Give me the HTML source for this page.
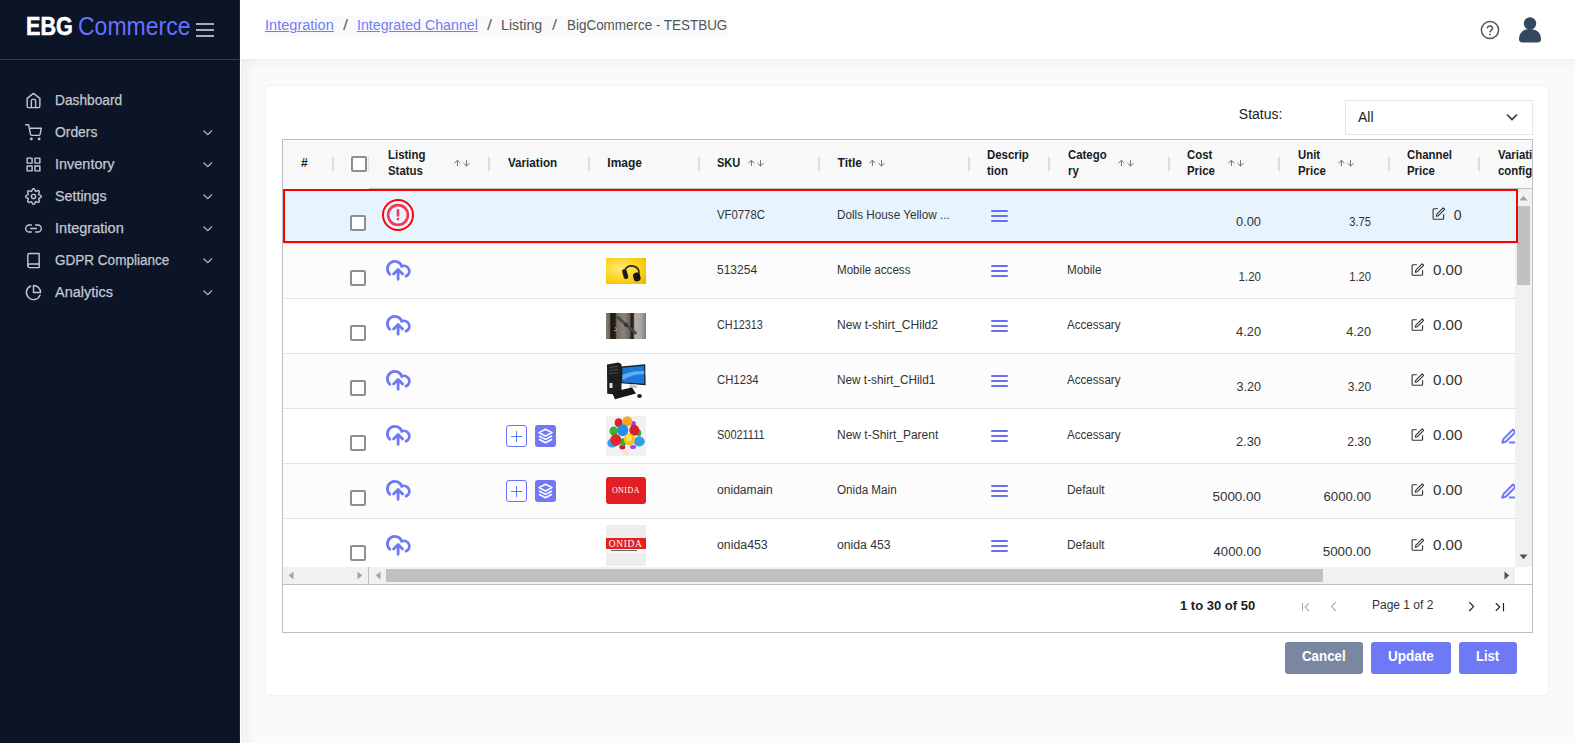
<!DOCTYPE html>
<html><head><meta charset="utf-8"><style>
html,body{margin:0;padding:0;}
body{width:1575px;height:743px;overflow:hidden;position:relative;font-family:"Liberation Sans", sans-serif;background:#f9fafb;}
.b{position:absolute;}
.t{position:absolute;line-height:1;white-space:nowrap;}
</style></head><body>
<div class="b" style="left:240.00px;top:0.00px;width:1335px;height:743px;background:#f9fafb;"></div>
<div class="b" style="left:240.00px;top:0.00px;width:1335px;height:59px;background:#fff;box-shadow:0 2px 8px 0 rgba(183,192,206,.22);"></div>
<div class="b" style="left:0.00px;top:0.00px;width:240px;height:743px;background:#0c1427;"></div>
<div class="b" style="left:239.00px;top:0.00px;width:1px;height:743px;background:#1a2335;"></div>
<div class="b" style="left:0.00px;top:59.00px;width:239px;height:1px;background:#2c3a50;"></div>
<div class="b" style="left:240.00px;top:0.00px;width:1px;height:743px;background:#fff;"></div>
<div class="b" style="left:241.00px;top:59.00px;width:14px;height:684px;background:linear-gradient(to right,rgba(183,192,206,.14),rgba(183,192,206,0));"></div>
<div class="t" style="top:12.90px;font-size:26px;color:#fff;font-weight:bold;left:26.00px;transform:scaleX(0.83);transform-origin:left center;-webkit-text-stroke:0.6px #fff;">EBG</div>
<div class="t" style="top:13.75px;font-size:25px;color:#6571ff;left:78.30px;transform:scaleX(0.92);transform-origin:left center;">Commerce</div>
<div class="b" style="left:196.00px;top:23.00px;width:18px;height:2px;background:#a9adb6;"></div>
<div class="b" style="left:196.00px;top:29.00px;width:18px;height:2px;background:#a9adb6;"></div>
<div class="b" style="left:196.00px;top:35.00px;width:18px;height:2px;background:#a9adb6;"></div>
<svg class="b" style="left:24.60px;top:92.00px;stroke:#c3c7cf;stroke-width:2;stroke-linecap:round;stroke-linejoin:round;" width="17" height="17" viewBox="0 0 24 24" fill="none"><path d="M3 9l9-7 9 7v11a2 2 0 0 1-2 2H5a2 2 0 0 1-2-2z"/><path d="M9 22V13a3 3 0 0 1 6 0v9"/></svg>
<div class="t" style="top:93.10px;font-size:14px;color:#c3c7cf;left:55.40px;transform:scaleX(0.981021897810219);transform-origin:left center;-webkit-text-stroke:0.25px #c3c7cf;">Dashboard</div>
<svg class="b" style="left:24.60px;top:124.00px;stroke:#c3c7cf;stroke-width:2;stroke-linecap:round;stroke-linejoin:round;" width="17" height="17" viewBox="0 0 24 24" fill="none"><circle cx="9" cy="21" r="1"/><circle cx="20" cy="21" r="1"/><path d="M1 1h4l2.68 13.39a2 2 0 0 0 2 1.61h9.72a2 2 0 0 0 2-1.61L23 6H6"/></svg>
<div class="t" style="top:125.10px;font-size:14px;color:#c3c7cf;left:55.40px;transform:scaleX(0.9906542056074766);transform-origin:left center;-webkit-text-stroke:0.25px #c3c7cf;">Orders</div>
<svg class="b" style="left:199.50px;top:125.20px;stroke:#c3c7cf;stroke-width:1.9;stroke-linecap:round;stroke-linejoin:round;" width="15.5" height="15.5" viewBox="0 0 24 24" fill="none"><polyline points="6 9 12 15 18 9"/></svg>
<svg class="b" style="left:24.60px;top:156.00px;stroke:#c3c7cf;stroke-width:2;stroke-linecap:round;stroke-linejoin:round;" width="17" height="17" viewBox="0 0 24 24" fill="none"><rect x="3" y="3" width="7" height="7"/><rect x="14" y="3" width="7" height="7"/><rect x="14" y="14" width="7" height="7"/><rect x="3" y="14" width="7" height="7"/></svg>
<div class="t" style="top:157.10px;font-size:14px;color:#c3c7cf;left:55.40px;transform:scaleX(1.0329861111111112);transform-origin:left center;-webkit-text-stroke:0.25px #c3c7cf;">Inventory</div>
<svg class="b" style="left:199.50px;top:157.20px;stroke:#c3c7cf;stroke-width:1.9;stroke-linecap:round;stroke-linejoin:round;" width="15.5" height="15.5" viewBox="0 0 24 24" fill="none"><polyline points="6 9 12 15 18 9"/></svg>
<svg class="b" style="left:24.60px;top:188.00px;stroke:#c3c7cf;stroke-width:2;stroke-linecap:round;stroke-linejoin:round;" width="17" height="17" viewBox="0 0 24 24" fill="none"><circle cx="12" cy="12" r="3"/><path d="M19.4 15a1.65 1.65 0 0 0 .33 1.82l.06.06a2 2 0 0 1 0 2.83 2 2 0 0 1-2.83 0l-.06-.06a1.65 1.65 0 0 0-1.82-.33 1.65 1.65 0 0 0-1 1.51V21a2 2 0 0 1-2 2 2 2 0 0 1-2-2v-.09A1.65 1.65 0 0 0 9 19.4a1.65 1.65 0 0 0-1.82.33l-.06.06a2 2 0 0 1-2.83 0 2 2 0 0 1 0-2.83l.06-.06a1.65 1.65 0 0 0 .33-1.82 1.65 1.65 0 0 0-1.51-1H3a2 2 0 0 1-2-2 2 2 0 0 1 2-2h.09A1.65 1.65 0 0 0 4.6 9a1.65 1.65 0 0 0-.33-1.82l-.06-.06a2 2 0 0 1 0-2.83 2 2 0 0 1 2.83 0l.06.06a1.65 1.65 0 0 0 1.82.33H9a1.65 1.65 0 0 0 1-1.51V3a2 2 0 0 1 2-2 2 2 0 0 1 2 2v.09a1.65 1.65 0 0 0 1 1.51 1.65 1.65 0 0 0 1.82-.33l.06-.06a2 2 0 0 1 2.83 0 2 2 0 0 1 0 2.83l-.06.06a1.65 1.65 0 0 0-.33 1.82V9a1.65 1.65 0 0 0 1.51 1H21a2 2 0 0 1 2 2 2 2 0 0 1-2 2h-.09a1.65 1.65 0 0 0-1.51 1z"/></svg>
<div class="t" style="top:189.10px;font-size:14px;color:#c3c7cf;left:55.40px;transform:scaleX(1.0217391304347827);transform-origin:left center;-webkit-text-stroke:0.25px #c3c7cf;">Settings</div>
<svg class="b" style="left:199.50px;top:189.20px;stroke:#c3c7cf;stroke-width:1.9;stroke-linecap:round;stroke-linejoin:round;" width="15.5" height="15.5" viewBox="0 0 24 24" fill="none"><polyline points="6 9 12 15 18 9"/></svg>
<svg class="b" style="left:24.60px;top:220.00px;stroke:#c3c7cf;stroke-width:2;stroke-linecap:round;stroke-linejoin:round;" width="17" height="17" viewBox="0 0 24 24" fill="none"><path d="M15 7h3a5 5 0 0 1 5 5 5 5 0 0 1-5 5h-3m-6 0H6a5 5 0 0 1-5-5 5 5 0 0 1 5-5h3"/><line x1="8" y1="12" x2="16" y2="12"/></svg>
<div class="t" style="top:221.10px;font-size:14px;color:#c3c7cf;left:55.40px;transform:scaleX(1.039274924471299);transform-origin:left center;-webkit-text-stroke:0.25px #c3c7cf;">Integration</div>
<svg class="b" style="left:199.50px;top:221.20px;stroke:#c3c7cf;stroke-width:1.9;stroke-linecap:round;stroke-linejoin:round;" width="15.5" height="15.5" viewBox="0 0 24 24" fill="none"><polyline points="6 9 12 15 18 9"/></svg>
<svg class="b" style="left:24.60px;top:252.00px;stroke:#c3c7cf;stroke-width:2;stroke-linecap:round;stroke-linejoin:round;" width="17" height="17" viewBox="0 0 24 24" fill="none"><path d="M4 19.5A2.5 2.5 0 0 1 6.5 17H20"/><path d="M6.5 2H20v20H6.5A2.5 2.5 0 0 1 4 19.5v-15A2.5 2.5 0 0 1 6.5 2z"/></svg>
<div class="t" style="top:253.10px;font-size:14px;color:#c3c7cf;left:55.40px;transform:scaleX(0.9661876584953508);transform-origin:left center;-webkit-text-stroke:0.25px #c3c7cf;">GDPR Compliance</div>
<svg class="b" style="left:199.50px;top:253.20px;stroke:#c3c7cf;stroke-width:1.9;stroke-linecap:round;stroke-linejoin:round;" width="15.5" height="15.5" viewBox="0 0 24 24" fill="none"><polyline points="6 9 12 15 18 9"/></svg>
<svg class="b" style="left:24.60px;top:284.00px;stroke:#c3c7cf;stroke-width:2;stroke-linecap:round;stroke-linejoin:round;" width="17" height="17" viewBox="0 0 24 24" fill="none"><path d="M21.21 15.89A10 10 0 1 1 8 2.83"/><path d="M22 12A10 10 0 0 0 12 2v10z"/></svg>
<div class="t" style="top:285.10px;font-size:14px;color:#c3c7cf;left:55.40px;transform:scaleX(1.0339285714285713);transform-origin:left center;-webkit-text-stroke:0.25px #c3c7cf;">Analytics</div>
<svg class="b" style="left:199.50px;top:285.20px;stroke:#c3c7cf;stroke-width:1.9;stroke-linecap:round;stroke-linejoin:round;" width="15.5" height="15.5" viewBox="0 0 24 24" fill="none"><polyline points="6 9 12 15 18 9"/></svg>
<div class="b" style="left:265.00px;top:16.00px;width:462px;height:21px;background:#f9fafb;"></div>
<div class="t" style="top:18.10px;font-size:14px;color:#727cf5;left:265.00px;transform:scaleX(1.04);transform-origin:left center;text-decoration:underline;">Integration</div>
<div class="t" style="top:18.10px;font-size:14px;color:#686868;left:343.00px;transform:scaleX(1.3);transform-origin:left center;">/</div>
<div class="t" style="top:18.10px;font-size:14px;color:#727cf5;left:357.00px;transform:scaleX(1.015);transform-origin:left center;text-decoration:underline;">Integrated Channel</div>
<div class="t" style="top:18.10px;font-size:14px;color:#686868;left:486.50px;transform:scaleX(1.3);transform-origin:left center;">/</div>
<div class="t" style="top:18.10px;font-size:14px;color:#555;left:501.00px;transform:scaleX(1.02);transform-origin:left center;">Listing</div>
<div class="t" style="top:18.10px;font-size:14px;color:#686868;left:552.00px;transform:scaleX(1.3);transform-origin:left center;">/</div>
<div class="t" style="top:18.10px;font-size:14px;color:#555;left:566.70px;transform:scaleX(0.96);transform-origin:left center;">BigCommerce - TESTBUG</div>
<svg class="b" style="left:1480.00px;top:20.00px;" width="20" height="20" viewBox="0 0 20 20" fill="none"><circle cx="10" cy="10" r="8.6" stroke="#555" stroke-width="1.5"/><path d="M7.4 7.9a2.6 2.6 0 0 1 5.1.6c0 1.6-2.4 2.1-2.4 3.3" stroke="#555" stroke-width="1.5" stroke-linecap="round"/><circle cx="10" cy="14.4" r="0.9" fill="#555"/></svg>
<svg class="b" style="left:1518.00px;top:17.00px;" width="24" height="26" viewBox="0 0 24 26" fill="none"><circle cx="12" cy="6.5" r="6.2" fill="#34495e"/><path d="M1 22.5C1 15.5 5.5 12 12 12s11 3.5 11 10.5c0 2-1.5 3-3.5 3h-15C2.5 25.5 1 24.5 1 22.5z" fill="#34495e"/></svg>
<div class="b" style="left:265.00px;top:85.00px;width:1284px;height:611px;background:#fff;border:1px solid #f0f1f6;border-radius:4px;box-sizing:border-box;"></div>
<div class="t" style="top:107.40px;font-size:14px;color:#222;left:1238.80px;">Status:</div>
<div class="b" style="left:1345.00px;top:100.00px;width:188px;height:35px;border:1px solid #e3e6ee;box-sizing:border-box;background:#fff;"></div>
<div class="t" style="top:109.50px;font-size:14px;color:#222;left:1358.00px;">All</div>
<svg class="b" style="left:1505.00px;top:112.00px;" width="14" height="10" viewBox="0 0 14 10" fill="none"><polyline points="2 2.5 7 7.5 12 2.5" stroke="#333" stroke-width="1.6" fill="none"/></svg>
<div class="b" style="left:282.00px;top:139.00px;width:1251px;height:494px;border:1px solid #babfc7;box-sizing:border-box;background:#fff;"></div>
<div class="b" style="left:283.00px;top:140.00px;width:1249px;height:48px;background:#f8f8f8;"></div>
<div class="b" style="left:369.00px;top:188.00px;width:1163px;height:1px;background:#babfc7;"></div>
<div class="b" style="left:368.00px;top:156.00px;width:1px;height:15px;background:#dde2eb;"></div>
<div class="b" style="left:332.00px;top:157.00px;width:2px;height:14px;background:rgba(186,191,199,.5);"></div>
<div class="b" style="left:488.00px;top:157.00px;width:2px;height:14px;background:rgba(186,191,199,.5);"></div>
<div class="b" style="left:588.00px;top:157.00px;width:2px;height:14px;background:rgba(186,191,199,.5);"></div>
<div class="b" style="left:698.00px;top:157.00px;width:2px;height:14px;background:rgba(186,191,199,.5);"></div>
<div class="b" style="left:818.00px;top:157.00px;width:2px;height:14px;background:rgba(186,191,199,.5);"></div>
<div class="b" style="left:968.00px;top:157.00px;width:2px;height:14px;background:rgba(186,191,199,.5);"></div>
<div class="b" style="left:1048.00px;top:157.00px;width:2px;height:14px;background:rgba(186,191,199,.5);"></div>
<div class="b" style="left:1168.00px;top:157.00px;width:2px;height:14px;background:rgba(186,191,199,.5);"></div>
<div class="b" style="left:1278.00px;top:157.00px;width:2px;height:14px;background:rgba(186,191,199,.5);"></div>
<div class="b" style="left:1388.00px;top:157.00px;width:2px;height:14px;background:rgba(186,191,199,.5);"></div>
<div class="b" style="left:1478.00px;top:157.00px;width:2px;height:14px;background:rgba(186,191,199,.5);"></div>
<div class="t" style="top:156.80px;font-size:12px;color:#181d1f;font-weight:bold;left:301.00px;">#</div>
<div class="b" style="left:351.00px;top:156.00px;width:16px;height:16px;border:2px solid #8e8e8e;border-radius:2px;box-sizing:border-box;background:#fff;"></div>
<div class="t" style="top:149.30px;font-size:12px;color:#181d1f;font-weight:bold;left:387.50px;transform:scaleX(0.95);transform-origin:left center;">Listing</div>
<div class="t" style="top:164.80px;font-size:12px;color:#181d1f;font-weight:bold;left:387.50px;transform:scaleX(0.95);transform-origin:left center;">Status</div>
<svg class="b" style="left:454.00px;top:159.00px;" width="17" height="9" viewBox="0 0 17 9" fill="none"><path d="M3.4 7V1.3M0.4 4.3L3.4 1.3l3 3M12.5 1.2V7M9.4 4l3.1 3.1 3.1-3.1" stroke="#5a5a5a" stroke-width="0.85" fill="none"/></svg>
<div class="t" style="top:157.00px;font-size:12px;color:#181d1f;font-weight:bold;left:507.50px;transform:scaleX(0.97);transform-origin:left center;">Variation</div>
<div class="t" style="top:157.00px;font-size:12px;color:#181d1f;font-weight:bold;left:607.30px;">Image</div>
<div class="t" style="top:157.00px;font-size:12px;color:#181d1f;font-weight:bold;left:717.40px;transform:scaleX(0.92);transform-origin:left center;">SKU</div>
<svg class="b" style="left:748.00px;top:159.00px;" width="17" height="9" viewBox="0 0 17 9" fill="none"><path d="M3.4 7V1.3M0.4 4.3L3.4 1.3l3 3M12.5 1.2V7M9.4 4l3.1 3.1 3.1-3.1" stroke="#5a5a5a" stroke-width="0.85" fill="none"/></svg>
<div class="t" style="top:157.00px;font-size:12px;color:#181d1f;font-weight:bold;left:837.60px;">Title</div>
<svg class="b" style="left:869.00px;top:159.00px;" width="17" height="9" viewBox="0 0 17 9" fill="none"><path d="M3.4 7V1.3M0.4 4.3L3.4 1.3l3 3M12.5 1.2V7M9.4 4l3.1 3.1 3.1-3.1" stroke="#5a5a5a" stroke-width="0.85" fill="none"/></svg>
<div class="t" style="top:149.30px;font-size:12px;color:#181d1f;font-weight:bold;left:987.40px;transform:scaleX(0.95);transform-origin:left center;">Descrip</div>
<div class="t" style="top:164.80px;font-size:12px;color:#181d1f;font-weight:bold;left:987.40px;transform:scaleX(0.95);transform-origin:left center;">tion</div>
<div class="t" style="top:149.30px;font-size:12px;color:#181d1f;font-weight:bold;left:1067.50px;transform:scaleX(0.95);transform-origin:left center;">Catego</div>
<div class="t" style="top:164.80px;font-size:12px;color:#181d1f;font-weight:bold;left:1067.50px;transform:scaleX(0.95);transform-origin:left center;">ry</div>
<svg class="b" style="left:1118.00px;top:159.00px;" width="17" height="9" viewBox="0 0 17 9" fill="none"><path d="M3.4 7V1.3M0.4 4.3L3.4 1.3l3 3M12.5 1.2V7M9.4 4l3.1 3.1 3.1-3.1" stroke="#5a5a5a" stroke-width="0.85" fill="none"/></svg>
<div class="t" style="top:149.30px;font-size:12px;color:#181d1f;font-weight:bold;left:1187.40px;transform:scaleX(0.95);transform-origin:left center;">Cost</div>
<div class="t" style="top:164.80px;font-size:12px;color:#181d1f;font-weight:bold;left:1187.40px;transform:scaleX(0.95);transform-origin:left center;">Price</div>
<svg class="b" style="left:1228.00px;top:159.00px;" width="17" height="9" viewBox="0 0 17 9" fill="none"><path d="M3.4 7V1.3M0.4 4.3L3.4 1.3l3 3M12.5 1.2V7M9.4 4l3.1 3.1 3.1-3.1" stroke="#5a5a5a" stroke-width="0.85" fill="none"/></svg>
<div class="t" style="top:149.30px;font-size:12px;color:#181d1f;font-weight:bold;left:1297.50px;transform:scaleX(0.95);transform-origin:left center;">Unit</div>
<div class="t" style="top:164.80px;font-size:12px;color:#181d1f;font-weight:bold;left:1297.50px;transform:scaleX(0.95);transform-origin:left center;">Price</div>
<svg class="b" style="left:1338.00px;top:159.00px;" width="17" height="9" viewBox="0 0 17 9" fill="none"><path d="M3.4 7V1.3M0.4 4.3L3.4 1.3l3 3M12.5 1.2V7M9.4 4l3.1 3.1 3.1-3.1" stroke="#5a5a5a" stroke-width="0.85" fill="none"/></svg>
<div class="t" style="top:149.30px;font-size:12px;color:#181d1f;font-weight:bold;left:1407.40px;transform:scaleX(0.95);transform-origin:left center;">Channel</div>
<div class="t" style="top:164.80px;font-size:12px;color:#181d1f;font-weight:bold;left:1407.40px;transform:scaleX(0.95);transform-origin:left center;">Price</div>
<div class="b" style="left:1478px;top:140px;width:54px;height:48px;overflow:hidden;">
<div class="t" style="top:9.30px;font-size:12px;color:#181d1f;font-weight:bold;left:19.60px;transform:scaleX(0.95);transform-origin:left center;">Variation</div>
<div class="t" style="top:24.80px;font-size:12px;color:#181d1f;font-weight:bold;left:19.60px;transform:scaleX(0.95);transform-origin:left center;">config</div>
</div>
<div class="b" style="left:283px;top:189px;width:1232px;height:378px;overflow:hidden;">
<div class="b" style="left:0.00px;top:0.00px;width:1232px;height:54px;background:#e8f4fd;"></div>
<div class="b" style="left:0.00px;top:54.00px;width:1232px;height:1px;background:#dde2eb;"></div>
<div class="b" style="left:67.00px;top:26.00px;width:16px;height:16px;border:2px solid #8e8e8e;border-radius:2px;box-sizing:border-box;background:#fff;"></div>
<svg class="b" style="left:99.00px;top:10.00px;" width="32" height="32" viewBox="0 0 32 32" fill="none"><circle cx="16" cy="16" r="15" stroke="#ff0000" stroke-width="2"/><circle cx="16" cy="16" r="9.9" stroke="#f5365c" stroke-width="2.6"/><path d="M16 11.4v5" stroke="#f5365c" stroke-width="2.6" stroke-linecap="round"/><circle cx="16" cy="20.1" r="1.3" fill="#f5365c"/></svg>
<div class="t" style="top:20.30px;font-size:12px;color:#333;left:433.60px;transform:scaleX(0.9442999999999999);transform-origin:left center;">VF0778C</div>
<div class="t" style="top:20.30px;font-size:12px;color:#333;left:553.70px;transform:scaleX(0.9767899999999998);transform-origin:left center;">Dolls House Yellow ...</div>
<div class="b" style="left:708.00px;top:20.80px;width:17px;height:2.5px;background:#6870f0;border-radius:1.25px;"></div>
<div class="b" style="left:708.00px;top:25.80px;width:17px;height:2.5px;background:#6870f0;border-radius:1.25px;"></div>
<div class="b" style="left:708.00px;top:30.80px;width:17px;height:2.5px;background:#6870f0;border-radius:1.25px;"></div>
<div class="t" style="top:26.80px;font-size:12px;color:#333;left:978.30px;transform:translateX(-100%) scaleX(1.07);transform-origin:right center;">0.00</div>
<div class="t" style="top:26.80px;font-size:12px;color:#333;left:1088.20px;transform:translateX(-100%) scaleX(0.93);transform-origin:right center;">3.75</div>
<svg class="b" style="left:1149.00px;top:18.00px;" width="14" height="14" viewBox="0 0 14 14" fill="none"><path d="M5.8 1.7H2.1a1 1 0 0 0-1 1v8.6a1 1 0 0 0 1 1h8.5a1 1 0 0 0 1-1V7.2" stroke="#333" stroke-width="1.1" fill="none"/><path d="M11.2 0.9l1.5 1.5-6.3 6.3-2.1.6.6-2.1z" stroke="#333" stroke-width="1.1" stroke-linejoin="round" fill="none"/></svg>
<div class="t" style="top:18.50px;font-size:14px;color:#333;left:1170.70px;">0</div>
<div class="b" style="left:0.00px;top:55.00px;width:1232px;height:54px;background:#fcfcfc;"></div>
<div class="b" style="left:0.00px;top:109.00px;width:1232px;height:1px;background:#dde2eb;"></div>
<div class="b" style="left:67.00px;top:81.00px;width:16px;height:16px;border:2px solid #8e8e8e;border-radius:2px;box-sizing:border-box;background:#fff;"></div>
<svg class="b" style="left:97.00px;top:63.00px;" width="38" height="34" viewBox="0 0 38 34" fill="none"><path d="M9.8 22.2A7.4 7.4 0 1 1 21.8 14.3A5.3 5.3 0 0 1 26.1 24.1" stroke="#6f78f7" stroke-width="2.8" stroke-linecap="round" fill="none"/><path d="M18.1 27.3V17.8M13.6 22.1l4.5-4.5 4.5 4.5" stroke="#6f78f7" stroke-width="2.8" stroke-linecap="round" stroke-linejoin="round" fill="none"/></svg>
<div class="t" style="top:75.30px;font-size:12px;color:#333;left:433.60px;transform:scaleX(1.0003499999999999);transform-origin:left center;">513254</div>
<div class="t" style="top:75.30px;font-size:12px;color:#333;left:553.70px;transform:scaleX(0.96612);transform-origin:left center;">Mobile access</div>
<div class="b" style="left:708.00px;top:75.80px;width:17px;height:2.5px;background:#6870f0;border-radius:1.25px;"></div>
<div class="b" style="left:708.00px;top:80.80px;width:17px;height:2.5px;background:#6870f0;border-radius:1.25px;"></div>
<div class="b" style="left:708.00px;top:85.80px;width:17px;height:2.5px;background:#6870f0;border-radius:1.25px;"></div>
<div class="t" style="top:75.30px;font-size:12px;color:#333;left:783.60px;transform:scaleX(0.97412);transform-origin:left center;">Mobile</div>
<div class="t" style="top:81.80px;font-size:12px;color:#333;left:978.30px;transform:translateX(-100%) scaleX(0.964);transform-origin:right center;">1.20</div>
<div class="t" style="top:81.80px;font-size:12px;color:#333;left:1088.20px;transform:translateX(-100%) scaleX(0.936);transform-origin:right center;">1.20</div>
<svg class="b" style="left:1128.00px;top:73.50px;" width="14" height="14" viewBox="0 0 14 14" fill="none"><path d="M5.8 1.7H2.1a1 1 0 0 0-1 1v8.6a1 1 0 0 0 1 1h8.5a1 1 0 0 0 1-1V7.2" stroke="#333" stroke-width="1.1" fill="none"/><path d="M11.2 0.9l1.5 1.5-6.3 6.3-2.1.6.6-2.1z" stroke="#333" stroke-width="1.1" stroke-linejoin="round" fill="none"/></svg>
<div class="t" style="top:73.90px;font-size:14px;color:#333;left:1150.00px;transform:scaleX(1.08);transform-origin:left center;">0.00</div>
<div class="b" style="left:323.00px;top:69.00px;width:40px;height:26px;background:radial-gradient(ellipse at 35% 40%,#ffe872 0,#fbd21a 55%,#eab500 100%);"></div>
<svg class="b" style="left:323.00px;top:69.00px;" width="40" height="26" viewBox="0 0 40 26" fill="none"><path d="M18.8 12.2A7.6 7.6 0 0 1 33.2 15.2" stroke="#262626" stroke-width="1.6" fill="none"/><path d="M17.2 11.5c1.2-.6 2.8-.2 3.4 1l1.6 5.5c.3 1.3-.3 2.6-1.5 3-1.2.4-2.5-.2-2.9-1.4L16.2 14c-.3-1.1.1-2.1 1-2.5z" fill="#1b1b1b"/><path d="M30.4 14.6c1.5-.5 3 .3 3.4 1.7l.8 3.2c.4 1.5-.5 3-2 3.4l-1.5.4c-1.5.4-3-.5-3.3-2l-.7-2.9c-.4-1.4.5-2.9 1.9-3.3z" fill="#151515"/></svg>
<div class="b" style="left:0.00px;top:164.00px;width:1232px;height:1px;background:#dde2eb;"></div>
<div class="b" style="left:67.00px;top:136.00px;width:16px;height:16px;border:2px solid #8e8e8e;border-radius:2px;box-sizing:border-box;background:#fff;"></div>
<svg class="b" style="left:97.00px;top:118.00px;" width="38" height="34" viewBox="0 0 38 34" fill="none"><path d="M9.8 22.2A7.4 7.4 0 1 1 21.8 14.3A5.3 5.3 0 0 1 26.1 24.1" stroke="#6f78f7" stroke-width="2.8" stroke-linecap="round" fill="none"/><path d="M18.1 27.3V17.8M13.6 22.1l4.5-4.5 4.5 4.5" stroke="#6f78f7" stroke-width="2.8" stroke-linecap="round" stroke-linejoin="round" fill="none"/></svg>
<div class="t" style="top:130.30px;font-size:12px;color:#333;left:433.60px;transform:scaleX(0.9043999999999999);transform-origin:left center;">CH12313</div>
<div class="t" style="top:130.30px;font-size:12px;color:#333;left:553.70px;transform:scaleX(1.01074);transform-origin:left center;">New t-shirt_CHild2</div>
<div class="b" style="left:708.00px;top:130.80px;width:17px;height:2.5px;background:#6870f0;border-radius:1.25px;"></div>
<div class="b" style="left:708.00px;top:135.80px;width:17px;height:2.5px;background:#6870f0;border-radius:1.25px;"></div>
<div class="b" style="left:708.00px;top:140.80px;width:17px;height:2.5px;background:#6870f0;border-radius:1.25px;"></div>
<div class="t" style="top:130.30px;font-size:12px;color:#333;left:783.60px;transform:scaleX(0.96726);transform-origin:left center;">Accessary</div>
<div class="t" style="top:136.80px;font-size:12px;color:#333;left:978.30px;transform:translateX(-100%) scaleX(1.065);transform-origin:right center;">4.20</div>
<div class="t" style="top:136.80px;font-size:12px;color:#333;left:1088.20px;transform:translateX(-100%) scaleX(1.061);transform-origin:right center;">4.20</div>
<svg class="b" style="left:1128.00px;top:128.50px;" width="14" height="14" viewBox="0 0 14 14" fill="none"><path d="M5.8 1.7H2.1a1 1 0 0 0-1 1v8.6a1 1 0 0 0 1 1h8.5a1 1 0 0 0 1-1V7.2" stroke="#333" stroke-width="1.1" fill="none"/><path d="M11.2 0.9l1.5 1.5-6.3 6.3-2.1.6.6-2.1z" stroke="#333" stroke-width="1.1" stroke-linejoin="round" fill="none"/></svg>
<div class="t" style="top:128.90px;font-size:14px;color:#333;left:1150.00px;transform:scaleX(1.08);transform-origin:left center;">0.00</div>
<div class="b" style="left:323.00px;top:124.00px;width:40px;height:26px;background:linear-gradient(90deg,#8b7f74 0,#6f655c 9%,#1c1a18 12%,#221f1c 23%,#7a6e62 27%,#8d8276 45%,#6a5e54 60%,#1e1c1a 63%,#2a2622 68%,#b4b0ab 72%,#a9a49f 88%,#7f7a75 100%);"></div>
<svg class="b" style="left:323.00px;top:124.00px;" width="40" height="26" viewBox="0 0 40 26" fill="none"><path d="M12 4.5L29.5 20" stroke="#3c4a52" stroke-width="3" stroke-linecap="round"/><circle cx="20" cy="12" r="2" fill="#2a3439"/><path d="M9 14l2 3M8 18l3-1" stroke="#a7b59a" stroke-width="0.8"/></svg>
<div class="b" style="left:0.00px;top:165.00px;width:1232px;height:54px;background:#fcfcfc;"></div>
<div class="b" style="left:0.00px;top:219.00px;width:1232px;height:1px;background:#dde2eb;"></div>
<div class="b" style="left:67.00px;top:191.00px;width:16px;height:16px;border:2px solid #8e8e8e;border-radius:2px;box-sizing:border-box;background:#fff;"></div>
<svg class="b" style="left:97.00px;top:173.00px;" width="38" height="34" viewBox="0 0 38 34" fill="none"><path d="M9.8 22.2A7.4 7.4 0 1 1 21.8 14.3A5.3 5.3 0 0 1 26.1 24.1" stroke="#6f78f7" stroke-width="2.8" stroke-linecap="round" fill="none"/><path d="M18.1 27.3V17.8M13.6 22.1l4.5-4.5 4.5 4.5" stroke="#6f78f7" stroke-width="2.8" stroke-linecap="round" stroke-linejoin="round" fill="none"/></svg>
<div class="t" style="top:185.30px;font-size:12px;color:#333;left:433.60px;transform:scaleX(0.9433499999999999);transform-origin:left center;">CH1234</div>
<div class="t" style="top:185.30px;font-size:12px;color:#333;left:553.70px;transform:scaleX(0.9826099999999999);transform-origin:left center;">New t-shirt_CHild1</div>
<div class="b" style="left:708.00px;top:185.80px;width:17px;height:2.5px;background:#6870f0;border-radius:1.25px;"></div>
<div class="b" style="left:708.00px;top:190.80px;width:17px;height:2.5px;background:#6870f0;border-radius:1.25px;"></div>
<div class="b" style="left:708.00px;top:195.80px;width:17px;height:2.5px;background:#6870f0;border-radius:1.25px;"></div>
<div class="t" style="top:185.30px;font-size:12px;color:#333;left:783.60px;transform:scaleX(0.96726);transform-origin:left center;">Accessary</div>
<div class="t" style="top:191.80px;font-size:12px;color:#333;left:978.30px;transform:translateX(-100%) scaleX(1.045);transform-origin:right center;">3.20</div>
<div class="t" style="top:191.80px;font-size:12px;color:#333;left:1088.20px;transform:translateX(-100%) scaleX(1.0);transform-origin:right center;">3.20</div>
<svg class="b" style="left:1128.00px;top:183.50px;" width="14" height="14" viewBox="0 0 14 14" fill="none"><path d="M5.8 1.7H2.1a1 1 0 0 0-1 1v8.6a1 1 0 0 0 1 1h8.5a1 1 0 0 0 1-1V7.2" stroke="#333" stroke-width="1.1" fill="none"/><path d="M11.2 0.9l1.5 1.5-6.3 6.3-2.1.6.6-2.1z" stroke="#333" stroke-width="1.1" stroke-linejoin="round" fill="none"/></svg>
<div class="t" style="top:183.90px;font-size:14px;color:#333;left:1150.00px;transform:scaleX(1.08);transform-origin:left center;">0.00</div>
<svg class="b" style="left:323.00px;top:172.00px;" width="40" height="40" viewBox="0 0 40 40" fill="none"><path d="M1 3.5L12.5 1.6 15.5 3.2V34L1.2 32.8z" fill="#1e1e1e"/><path d="M3 6.5l9-1.2M3 9.5l9-1.1M3 12.5l9-1" stroke="#4a4a4a" stroke-width="1"/><rect x="3.5" y="22" width="3" height="5" fill="#ddd"/><path d="M15 5.5L39.2 3.2 39.6 24.2 15 22.3z" fill="#1c1c1c"/><path d="M16.4 6.8L38 4.8 38.3 22.8 16.4 21.2z" fill="#1f78d6"/><path d="M16.4 14c7-3 14-4.5 21.9-4v3c-8 0-15 2-21.9 6z" fill="#56b0f2"/><path d="M24 23h6l1 4h-8z" fill="#c8c8c8"/><path d="M5.8 31L26 26.5 30 32.5 9 38.3z" fill="#151515"/><ellipse cx="33.5" cy="35" rx="2.4" ry="1.9" fill="#222"/></svg>
<div class="b" style="left:0.00px;top:274.00px;width:1232px;height:1px;background:#dde2eb;"></div>
<div class="b" style="left:67.00px;top:246.00px;width:16px;height:16px;border:2px solid #8e8e8e;border-radius:2px;box-sizing:border-box;background:#fff;"></div>
<svg class="b" style="left:97.00px;top:228.00px;" width="38" height="34" viewBox="0 0 38 34" fill="none"><path d="M9.8 22.2A7.4 7.4 0 1 1 21.8 14.3A5.3 5.3 0 0 1 26.1 24.1" stroke="#6f78f7" stroke-width="2.8" stroke-linecap="round" fill="none"/><path d="M18.1 27.3V17.8M13.6 22.1l4.5-4.5 4.5 4.5" stroke="#6f78f7" stroke-width="2.8" stroke-linecap="round" stroke-linejoin="round" fill="none"/></svg>
<div class="b" style="left:223.00px;top:236.00px;width:21px;height:22px;border:1px solid #6571ff;border-radius:3px;box-sizing:border-box;"></div>
<div class="b" style="left:228.00px;top:246.80px;width:11px;height:1.2px;background:#6571ff;"></div>
<div class="b" style="left:232.90px;top:242.00px;width:1.2px;height:10.8px;background:#6571ff;"></div>
<div class="b" style="left:252.00px;top:236.00px;width:21px;height:22px;background:#6f79f5;border-radius:3px;"></div>
<svg class="b" style="left:254.00px;top:238.00px;" width="17" height="18" viewBox="0 0 17 18" fill="none"><path d="M8.5 2.2L15 5.6 8.5 9 2 5.6z" stroke="#fff" stroke-width="1.6" fill="none" stroke-linejoin="round"/><path d="M2 9l6.5 3.4L15 9M2 12.3l6.5 3.4 6.5-3.4" stroke="#fff" stroke-width="1.6" fill="none" stroke-linejoin="round"/></svg>
<div class="t" style="top:240.30px;font-size:12px;color:#333;left:433.60px;transform:scaleX(0.9129499999999999);transform-origin:left center;">S0021111</div>
<div class="t" style="top:240.30px;font-size:12px;color:#333;left:553.70px;transform:scaleX(0.9991);transform-origin:left center;">New t-Shirt_Parent</div>
<div class="b" style="left:708.00px;top:240.80px;width:17px;height:2.5px;background:#6870f0;border-radius:1.25px;"></div>
<div class="b" style="left:708.00px;top:245.80px;width:17px;height:2.5px;background:#6870f0;border-radius:1.25px;"></div>
<div class="b" style="left:708.00px;top:250.80px;width:17px;height:2.5px;background:#6870f0;border-radius:1.25px;"></div>
<div class="t" style="top:240.30px;font-size:12px;color:#333;left:783.60px;transform:scaleX(0.96726);transform-origin:left center;">Accessary</div>
<div class="t" style="top:246.80px;font-size:12px;color:#333;left:978.30px;transform:translateX(-100%) scaleX(1.073);transform-origin:right center;">2.30</div>
<div class="t" style="top:246.80px;font-size:12px;color:#333;left:1088.20px;transform:translateX(-100%) scaleX(1.022);transform-origin:right center;">2.30</div>
<svg class="b" style="left:1128.00px;top:238.50px;" width="14" height="14" viewBox="0 0 14 14" fill="none"><path d="M5.8 1.7H2.1a1 1 0 0 0-1 1v8.6a1 1 0 0 0 1 1h8.5a1 1 0 0 0 1-1V7.2" stroke="#333" stroke-width="1.1" fill="none"/><path d="M11.2 0.9l1.5 1.5-6.3 6.3-2.1.6.6-2.1z" stroke="#333" stroke-width="1.1" stroke-linejoin="round" fill="none"/></svg>
<div class="t" style="top:238.90px;font-size:14px;color:#333;left:1150.00px;transform:scaleX(1.08);transform-origin:left center;">0.00</div>
<svg class="b" style="left:1217.00px;top:238.00px;" width="18" height="18" viewBox="0 0 18 18" fill="none"><path d="M13 2.5l2.5 2.5L6 14.5 2.2 15.8 3.5 12z" stroke="#6f78f7" stroke-width="2" fill="none" stroke-linejoin="round"/><path d="M9 15.5h8" stroke="#6f78f7" stroke-width="2"/></svg>
<div class="b" style="left:323.00px;top:227.00px;width:40px;height:40px;background:#f1f1f1;"></div>
<svg class="b" style="left:323.00px;top:227.00px;" width="40" height="40" viewBox="0 0 40 40" fill="none"><path d="M17 33l2 6M20 33l0 6M23 33l-2 6" stroke="#e8d9c0" stroke-width="0.7"/><ellipse cx="27.3" cy="7.9" rx="2.6" ry="3" fill="#b03be0"/><ellipse cx="33" cy="17" rx="2.2" ry="3.6" fill="#2fb52f"/><ellipse cx="12.6" cy="6.8" rx="4" ry="4.6" fill="#d9232b"/><ellipse cx="21.3" cy="5.4" rx="5" ry="5.2" fill="#f5a623"/><ellipse cx="7.7" cy="15" rx="4.2" ry="4.6" fill="#2fb52f"/><ellipse cx="28.3" cy="14.3" rx="5" ry="5.5" fill="#d8202a"/><ellipse cx="16.8" cy="14.3" rx="5.5" ry="6" fill="#1f8fe8"/><ellipse cx="6.3" cy="27" rx="5" ry="4.5" fill="#2f9ff0"/><ellipse cx="27" cy="31" rx="3" ry="2" fill="#b13ee8"/><ellipse cx="16.4" cy="31" rx="3" ry="2.5" fill="#c81d25"/><ellipse cx="17.1" cy="26.3" rx="3" ry="4" fill="#2fb52f"/><ellipse cx="9.8" cy="24.1" rx="5.5" ry="6" fill="#e0262e"/><ellipse cx="33.2" cy="25.5" rx="5.5" ry="5" fill="#2aa0ee"/><ellipse cx="23.4" cy="23.4" rx="5.5" ry="6" fill="#fbbf24"/><ellipse cx="22.8" cy="22" rx="3" ry="3.2" fill="#ffe14a"/></svg>
<div class="b" style="left:0.00px;top:275.00px;width:1232px;height:54px;background:#fcfcfc;"></div>
<div class="b" style="left:0.00px;top:329.00px;width:1232px;height:1px;background:#dde2eb;"></div>
<div class="b" style="left:67.00px;top:301.00px;width:16px;height:16px;border:2px solid #8e8e8e;border-radius:2px;box-sizing:border-box;background:#fff;"></div>
<svg class="b" style="left:97.00px;top:283.00px;" width="38" height="34" viewBox="0 0 38 34" fill="none"><path d="M9.8 22.2A7.4 7.4 0 1 1 21.8 14.3A5.3 5.3 0 0 1 26.1 24.1" stroke="#6f78f7" stroke-width="2.8" stroke-linecap="round" fill="none"/><path d="M18.1 27.3V17.8M13.6 22.1l4.5-4.5 4.5 4.5" stroke="#6f78f7" stroke-width="2.8" stroke-linecap="round" stroke-linejoin="round" fill="none"/></svg>
<div class="b" style="left:223.00px;top:291.00px;width:21px;height:22px;border:1px solid #6571ff;border-radius:3px;box-sizing:border-box;"></div>
<div class="b" style="left:228.00px;top:301.80px;width:11px;height:1.2px;background:#6571ff;"></div>
<div class="b" style="left:232.90px;top:297.00px;width:1.2px;height:10.8px;background:#6571ff;"></div>
<div class="b" style="left:252.00px;top:291.00px;width:21px;height:22px;background:#6f79f5;border-radius:3px;"></div>
<svg class="b" style="left:254.00px;top:293.00px;" width="17" height="18" viewBox="0 0 17 18" fill="none"><path d="M8.5 2.2L15 5.6 8.5 9 2 5.6z" stroke="#fff" stroke-width="1.6" fill="none" stroke-linejoin="round"/><path d="M2 9l6.5 3.4L15 9M2 12.3l6.5 3.4 6.5-3.4" stroke="#fff" stroke-width="1.6" fill="none" stroke-linejoin="round"/></svg>
<div class="t" style="top:295.30px;font-size:12px;color:#333;left:433.60px;transform:scaleX(1.007);transform-origin:left center;">onidamain</div>
<div class="t" style="top:295.30px;font-size:12px;color:#333;left:553.70px;transform:scaleX(0.97194);transform-origin:left center;">Onida Main</div>
<div class="b" style="left:708.00px;top:295.80px;width:17px;height:2.5px;background:#6870f0;border-radius:1.25px;"></div>
<div class="b" style="left:708.00px;top:300.80px;width:17px;height:2.5px;background:#6870f0;border-radius:1.25px;"></div>
<div class="b" style="left:708.00px;top:305.80px;width:17px;height:2.5px;background:#6870f0;border-radius:1.25px;"></div>
<div class="t" style="top:295.30px;font-size:12px;color:#333;left:783.60px;transform:scaleX(0.9878399999999999);transform-origin:left center;">Default</div>
<div class="t" style="top:301.80px;font-size:12px;color:#333;left:978.30px;transform:translateX(-100%) scaleX(1.119);transform-origin:right center;">5000.00</div>
<div class="t" style="top:301.80px;font-size:12px;color:#333;left:1088.20px;transform:translateX(-100%) scaleX(1.093);transform-origin:right center;">6000.00</div>
<svg class="b" style="left:1128.00px;top:293.50px;" width="14" height="14" viewBox="0 0 14 14" fill="none"><path d="M5.8 1.7H2.1a1 1 0 0 0-1 1v8.6a1 1 0 0 0 1 1h8.5a1 1 0 0 0 1-1V7.2" stroke="#333" stroke-width="1.1" fill="none"/><path d="M11.2 0.9l1.5 1.5-6.3 6.3-2.1.6.6-2.1z" stroke="#333" stroke-width="1.1" stroke-linejoin="round" fill="none"/></svg>
<div class="t" style="top:293.90px;font-size:14px;color:#333;left:1150.00px;transform:scaleX(1.08);transform-origin:left center;">0.00</div>
<svg class="b" style="left:1217.00px;top:293.00px;" width="18" height="18" viewBox="0 0 18 18" fill="none"><path d="M13 2.5l2.5 2.5L6 14.5 2.2 15.8 3.5 12z" stroke="#6f78f7" stroke-width="2" fill="none" stroke-linejoin="round"/><path d="M9 15.5h8" stroke="#6f78f7" stroke-width="2"/></svg>
<div class="b" style="left:323.00px;top:288.00px;width:40px;height:27px;background:#e31e24;border-radius:3px;"></div>
<div class="t" style="top:297.70px;font-size:8px;color:#fff;left:328.90px;font-family:'Liberation Serif',serif;letter-spacing:0.45px;">ONIDA</div>
<div class="b" style="left:0.00px;top:384.00px;width:1232px;height:1px;background:#dde2eb;"></div>
<div class="b" style="left:67.00px;top:356.00px;width:16px;height:16px;border:2px solid #8e8e8e;border-radius:2px;box-sizing:border-box;background:#fff;"></div>
<svg class="b" style="left:97.00px;top:338.00px;" width="38" height="34" viewBox="0 0 38 34" fill="none"><path d="M9.8 22.2A7.4 7.4 0 1 1 21.8 14.3A5.3 5.3 0 0 1 26.1 24.1" stroke="#6f78f7" stroke-width="2.8" stroke-linecap="round" fill="none"/><path d="M18.1 27.3V17.8M13.6 22.1l4.5-4.5 4.5 4.5" stroke="#6f78f7" stroke-width="2.8" stroke-linecap="round" stroke-linejoin="round" fill="none"/></svg>
<div class="t" style="top:350.30px;font-size:12px;color:#333;left:433.60px;transform:scaleX(1.0269499999999998);transform-origin:left center;">onida453</div>
<div class="t" style="top:350.30px;font-size:12px;color:#333;left:553.70px;transform:scaleX(1.01559);transform-origin:left center;">onida 453</div>
<div class="b" style="left:708.00px;top:350.80px;width:17px;height:2.5px;background:#6870f0;border-radius:1.25px;"></div>
<div class="b" style="left:708.00px;top:355.80px;width:17px;height:2.5px;background:#6870f0;border-radius:1.25px;"></div>
<div class="b" style="left:708.00px;top:360.80px;width:17px;height:2.5px;background:#6870f0;border-radius:1.25px;"></div>
<div class="t" style="top:350.30px;font-size:12px;color:#333;left:783.60px;transform:scaleX(0.9878399999999999);transform-origin:left center;">Default</div>
<div class="t" style="top:356.80px;font-size:12px;color:#333;left:978.30px;transform:translateX(-100%) scaleX(1.093);transform-origin:right center;">4000.00</div>
<div class="t" style="top:356.80px;font-size:12px;color:#333;left:1088.20px;transform:translateX(-100%) scaleX(1.112);transform-origin:right center;">5000.00</div>
<svg class="b" style="left:1128.00px;top:348.50px;" width="14" height="14" viewBox="0 0 14 14" fill="none"><path d="M5.8 1.7H2.1a1 1 0 0 0-1 1v8.6a1 1 0 0 0 1 1h8.5a1 1 0 0 0 1-1V7.2" stroke="#333" stroke-width="1.1" fill="none"/><path d="M11.2 0.9l1.5 1.5-6.3 6.3-2.1.6.6-2.1z" stroke="#333" stroke-width="1.1" stroke-linejoin="round" fill="none"/></svg>
<div class="t" style="top:348.90px;font-size:14px;color:#333;left:1150.00px;transform:scaleX(1.08);transform-origin:left center;">0.00</div>
<div class="b" style="left:323.00px;top:336.00px;width:40px;height:41px;background:#ededed;"></div>
<div class="b" style="left:323.00px;top:349.00px;width:40px;height:11px;background:#e31e24;"></div>
<div class="b" style="left:323.00px;top:360.00px;width:40px;height:3.5px;background:#f7f7f7;"></div>
<div class="t" style="top:350.82px;font-size:9.5px;color:#fff;left:325.80px;font-family:'Liberation Serif',serif;letter-spacing:0.6px;">ONIDA</div>
<div class="b" style="left:327.50px;top:360.80px;width:26px;height:1.6px;background:#666;"></div>
</div>
<div class="b" style="left:1515.00px;top:189.00px;width:17px;height:378px;background:#f1f1f1;"></div>
<div class="b" style="left:1517.00px;top:206.00px;width:13px;height:79px;background:#c1c1c1;"></div>
<svg class="b" style="left:1519.00px;top:195.00px;" width="9" height="6" viewBox="0 0 9 6" fill="none"><path d="M0.5 5.5L4.5 0.8 8.5 5.5z" fill="#a3a3a3"/></svg>
<svg class="b" style="left:1519.00px;top:554.00px;" width="9" height="6" viewBox="0 0 9 6" fill="none"><path d="M0.5 0.5L4.5 5.2 8.5 0.5z" fill="#505050"/></svg>
<div class="b" style="left:283.00px;top:189.00px;width:1235px;height:54px;border:2px solid #ff0000;box-sizing:border-box;"></div>
<div class="b" style="left:283.00px;top:567.00px;width:1232px;height:17px;background:#f1f1f1;"></div>
<div class="b" style="left:368.00px;top:567.00px;width:1px;height:17px;background:#babfc7;"></div>
<div class="b" style="left:386.00px;top:569.00px;width:937px;height:13px;background:#c1c1c1;"></div>
<div class="b" style="left:1515.00px;top:567.00px;width:17px;height:17px;background:#fff;"></div>
<svg class="b" style="left:288.00px;top:571.00px;" width="6" height="9" viewBox="0 0 6 9" fill="none"><path d="M5.5 0.5L0.8 4.5 5.5 8.5z" fill="#a3a3a3"/></svg>
<svg class="b" style="left:357.00px;top:571.00px;" width="6" height="9" viewBox="0 0 6 9" fill="none"><path d="M0.5 0.5L5.2 4.5 0.5 8.5z" fill="#a3a3a3"/></svg>
<svg class="b" style="left:375.00px;top:571.00px;" width="6" height="9" viewBox="0 0 6 9" fill="none"><path d="M5.5 0.5L0.8 4.5 5.5 8.5z" fill="#a3a3a3"/></svg>
<svg class="b" style="left:1504.00px;top:571.00px;" width="6" height="9" viewBox="0 0 6 9" fill="none"><path d="M0.5 0.5L5.2 4.5 0.5 8.5z" fill="#505050"/></svg>
<div class="b" style="left:283.00px;top:584.00px;width:1249px;height:1px;background:#babfc7;"></div>
<div class="t" style="top:599.05px;font-size:13px;color:#181d1f;font-weight:bold;left:1180.00px;">1 to 30 of 50</div>
<svg class="b" style="left:1299.00px;top:602.00px;" width="12" height="10" viewBox="0 0 12 10" fill="none"><path d="M3.5 1v8.2M10 1.2L6.2 5.1 10 9" stroke="#aaa" stroke-width="1.1" fill="none"/></svg>
<svg class="b" style="left:1329.00px;top:601.00px;" width="9" height="11" viewBox="0 0 9 11" fill="none"><path d="M6.8 1.2L2.6 5.6l4.2 4.4" stroke="#aaa" stroke-width="1.1" fill="none"/></svg>
<div class="t" style="top:599.48px;font-size:12.5px;color:#333;left:1371.50px;transform:scaleX(0.96);transform-origin:left center;">Page 1 of 2</div>
<svg class="b" style="left:1467.00px;top:601.00px;" width="9" height="11" viewBox="0 0 9 11" fill="none"><path d="M2.3 1.2l4.3 4.4-4.3 4.4" stroke="#181d1f" stroke-width="1.15" fill="none"/></svg>
<svg class="b" style="left:1494.00px;top:602.00px;" width="12" height="10" viewBox="0 0 12 10" fill="none"><path d="M1.8 1.1l3.9 3.9-3.9 3.9M9.5 1v8.2" stroke="#181d1f" stroke-width="1.15" fill="none"/></svg>
<div class="b" style="left:1285.00px;top:642.00px;width:78px;height:32px;background:#7987a1;border-radius:3px;"></div>
<div class="b" style="left:1371.00px;top:642.00px;width:80px;height:32px;background:#6f79f5;border-radius:3px;"></div>
<div class="b" style="left:1459.00px;top:642.00px;width:58px;height:32px;background:#6f79f5;border-radius:3px;"></div>
<div class="t" style="top:649.10px;font-size:14px;color:#fff;font-weight:bold;left:1302.00px;transform:scaleX(0.95);transform-origin:left center;">Cancel</div>
<div class="t" style="top:649.10px;font-size:14px;color:#fff;font-weight:bold;left:1388.00px;transform:scaleX(0.965);transform-origin:left center;">Update</div>
<div class="t" style="top:649.10px;font-size:14px;color:#fff;font-weight:bold;left:1476.40px;transform:scaleX(0.93);transform-origin:left center;">List</div>
</body></html>
